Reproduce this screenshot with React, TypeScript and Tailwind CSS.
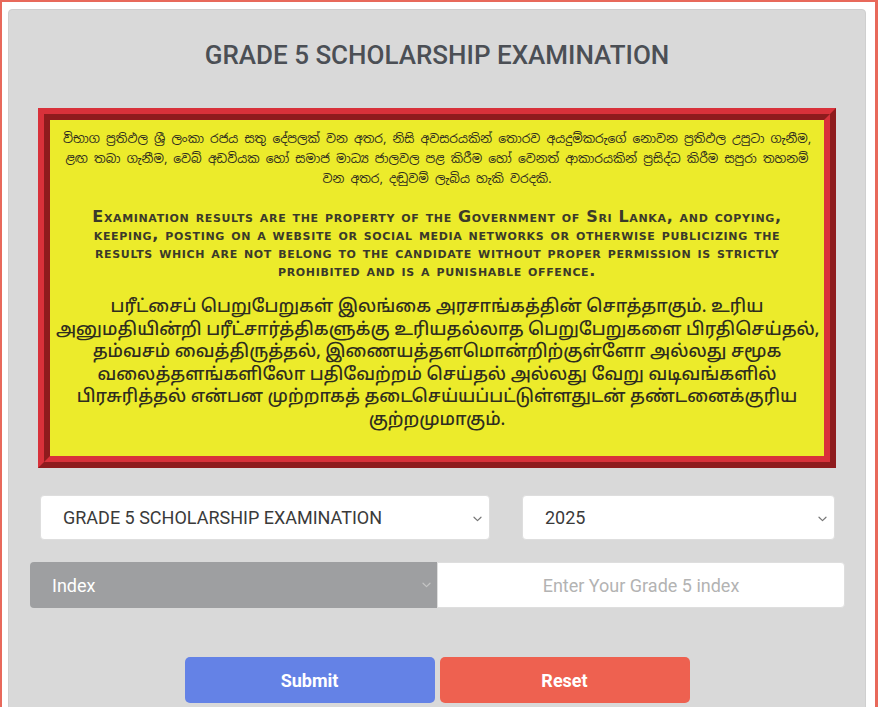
import React from 'react';

const Chevron: React.FC<{ className?: string }> = ({ className }) => (
  <svg
    className={className}
    width="9"
    height="6"
    viewBox="0 0 9 6"
    fill="none"
    stroke="currentColor"
    strokeWidth="1.2"
    strokeLinecap="round"
    strokeLinejoin="round"
  >
    <path d="M1 1.2l3.5 3.4L8 1.2" />
  </svg>
);

const Notice: React.FC = () => (
  <div className="border-[6px] border-t-[#d8313a] border-l-[#d8313a] border-b-[#8e1b1d] border-r-[#8e1b1d]">
    <div className="border-[6px] border-t-[#8e1b1d] border-l-[#8e1b1d] border-b-[#d8313a] border-r-[#d8313a] bg-[#eceb2b] px-[6px] pt-[9px] pb-[24px] text-center text-[#2f2d1f]">
      <p className="whitespace-nowrap font-['Noto_Sans_Sinhala','Iskoola_Pota','Noto_Sans',sans-serif] text-[12.3px] leading-[20px]">
        විභාග ප්‍රතිඵල ශ්‍රී ලංකා රජය සතු දේපලක් වන අතර, නිසි අවසරයකින් තොරව අයදුම්කරුගේ නොවන ප්‍රතිඵල උපුටා ගැනීම,
        <br />
        ළඟ තබා ගැනීම, වෙබ් අඩවියක හෝ සමාජ මාධ්‍ය ජාලවල පළ කිරීම හෝ වෙනත් ආකාරයකින් ප්‍රසිද්ධ කිරීම සපුරා තහනම්
        <br />
        වන අතර, දඬුවම් ලැබිය හැකි වරදකි.
      </p>
      <p className="mt-[19px] whitespace-nowrap font-['DejaVu_Sans',Verdana,sans-serif] text-[16px] font-bold leading-[18px] tracking-[0.65px] text-[#3b3a2a] [font-variant:small-caps]">
        Examination results are the property of the Government of Sri Lanka, and copying,
        <br />
        keeping, posting on a website or social media networks or otherwise publicizing the
        <br />
        results which are not belong to the candidate without proper permission is strictly
        <br />
        prohibited and is a punishable offence.
      </p>
      <p className="mt-[17px] whitespace-nowrap font-['Noto_Sans_Tamil','Latha','Noto_Sans',sans-serif] text-[17.5px] font-medium leading-[22.5px]">
        பரீட்சைப் பெறுபேறுகள் இலங்கை அரசாங்கத்தின் சொத்தாகும். உரிய
        <br />
        அனுமதியின்றி பரீட்சார்த்திகளுக்கு உரியதல்லாத பெறுபேறுகளை பிரதிசெய்தல்,
        <br />
        தம்வசம் வைத்திருத்தல், இணையத்தளமொன்றிற்குள்ளோ அல்லது சமூக
        <br />
        வலைத்தளங்களிலோ பதிவேற்றம் செய்தல் அல்லது வேறு வடிவங்களில்
        <br />
        பிரசுரித்தல் என்பன முற்றாகத் தடைசெய்யப்பட்டுள்ளதுடன் தண்டனைக்குரிய
        <br />
        குற்றமுமாகும்.
      </p>
    </div>
  </div>
);

const App: React.FC = () => {
  return (
    <div className="w-[878px] h-[707px] overflow-hidden bg-white border-t-2 border-l-2 border-r-[3px] border-[#e8695b] pt-[7px] pl-[6px] font-['Roboto',sans-serif]">
      <div className="w-[858px] h-[720px] rounded bg-[#d9d9d9] border border-[#cfcfcf] px-[29px]">
        <h1 className="pt-[29px] text-center text-[26px] leading-[32px] font-medium text-[#4b4f55]">
          GRADE 5 SCHOLARSHIP EXAMINATION
        </h1>

        <div className="mt-[37px]">
          <Notice />
        </div>

        {/* exam + year */}
        <div className="mt-[27px] flex gap-[32px] pl-[2px]">
          <div className="relative w-[450px] h-[45px] rounded bg-white border border-[#dedede] flex items-center px-[22px] text-[18px] text-[#3a3a3a]">
            GRADE 5 SCHOLARSHIP EXAMINATION
            <Chevron className="absolute right-[7px] top-[20px] text-[#777]" />
          </div>
          <div className="relative w-[313px] h-[45px] rounded bg-white border border-[#dedede] flex items-center px-[22px] text-[18px] text-[#3a3a3a]">
            2025
            <Chevron className="absolute right-[7px] top-[20px] text-[#777]" />
          </div>
        </div>

        {/* index input group */}
        <div className="mt-[22px] -ml-[8px] w-[815px] h-[46px] flex">
          <div className="relative w-[407px] h-full rounded-l bg-[#9e9fa1] flex items-center px-[22px] text-[18px] text-white">
            Index
            <Chevron className="absolute right-[6px] top-[20px] text-[#c4c4c4]" />
          </div>
          <div className="flex-1 h-full rounded-r bg-white border border-[#dedede] flex items-center justify-center text-[18px] text-[#b3b3b3]">
            Enter Your Grade 5 index
          </div>
        </div>

        {/* actions */}
        <div className="mt-[49px] flex justify-center gap-[5px]">
          <button className="w-[250px] h-[46px] rounded-[5px] bg-[#6482e6] text-white text-[18px] font-bold">
            Submit
          </button>
          <button className="w-[250px] h-[46px] rounded-[5px] bg-[#ee6150] text-white text-[18px] font-bold">
            Reset
          </button>
        </div>
      </div>
    </div>
  );
};

export default App;
